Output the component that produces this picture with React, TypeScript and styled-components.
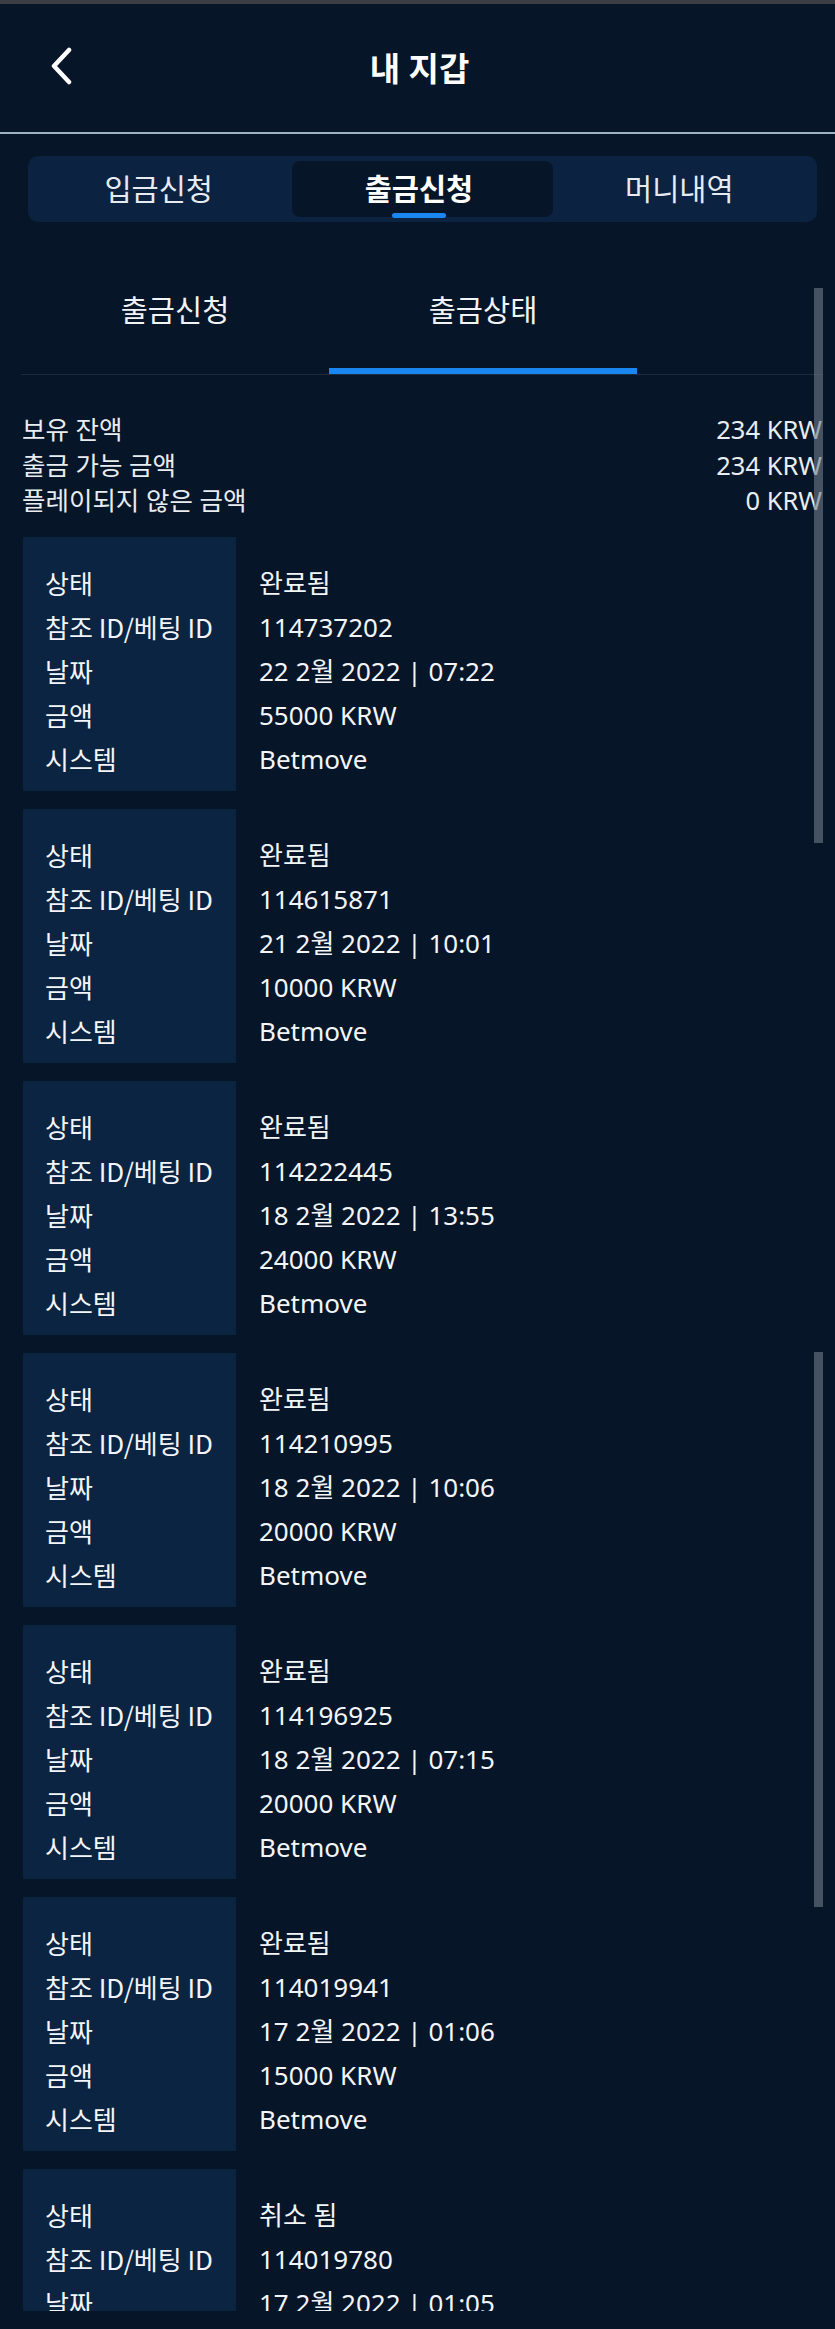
import React from "react";
import styled, { createGlobalStyle } from "styled-components";

const GlobalStyle = createGlobalStyle`
  html, body { margin: 0; padding: 0; background: #061628; }
  body {
    font-family: "Noto Sans", "Noto Sans CJK KR", sans-serif;
    color: #f1f3f6;
  }
  * { box-sizing: border-box; }
`;

const Screen = styled.div`
  position: relative;
  width: 835px;
  height: 2329px;
  overflow: hidden;
  background: #061628;
`;

const StatusStrip = styled.div`
  height: 4px;
  background: #3a3d42;
`;

const Header = styled.header`
  height: 128px;
  display: grid;
  grid-template-columns: 1fr auto 1fr;
  align-items: center;
`;

const BackButton = styled.button`
  justify-self: start;
  margin-left: 47px;
  margin-top: -4px;
  width: 28px;
  height: 40px;
  padding: 0;
  border: 0;
  background: none;
  display: flex;
  align-items: center;
  justify-content: center;
  cursor: pointer;
`;

const Title = styled.h1`
  margin: 0 0 0 4px;
  font-size: 33px;
  font-weight: 700;
  line-height: 1;
  color: #ffffff;
`;

const Divider = styled.div`
  height: 2px;
  background: #9db1c5;
`;

const MainTabs = styled.nav`
  margin: 22px 18px 0 28px;
  height: 66px;
  padding: 5px 4px;
  border-radius: 10px;
  background: #0b2341;
  display: flex;
`;

const MainTab = styled.button<{ $active?: boolean }>`
  position: relative;
  flex: 1;
  border: 0;
  border-radius: 8px;
  background: ${(p) => (p.$active ? "#061628" : "transparent")};
  color: ${(p) => (p.$active ? "#ffffff" : "#e6ebf1")};
  font-family: inherit;
  font-size: 29.5px;
  font-weight: ${(p) => (p.$active ? 700 : 400)};
  line-height: 1;
  padding: 0 7px 0 0;
  cursor: pointer;

  &::after {
    content: "";
    display: ${(p) => (p.$active ? "block" : "none")};
    position: absolute;
    left: calc(50% - 3px);
    bottom: -1px;
    width: 54px;
    height: 5px;
    margin-left: -27px;
    border-radius: 3px;
    background: #1a86f0;
  }
`;

const Body = styled.main`
  height: 2089px;
  overflow: hidden;
`;

const SubTabs = styled.div`
  margin: 26px 12px 0 21px;
  display: flex;
  border-bottom: 1px solid #1c2b3e;
`;

const SubTab = styled.button<{ $active?: boolean }>`
  width: 308px;
  height: 126px;
  padding: 4px 0 0;
  border: 0;
  border-bottom: 6px solid ${(p) => (p.$active ? "#1a86f0" : "transparent")};
  background: none;
  color: #f1f3f6;
  font-family: inherit;
  font-size: 29.5px;
  font-weight: 400;
  line-height: 1;
  cursor: pointer;
`;

const Balances = styled.dl`
  margin: 37px 13px 0 22px;
  padding: 0;
`;

const BalanceRow = styled.div`
  display: flex;
  justify-content: space-between;
  height: 35.5px;
  align-items: center;
  font-size: 25.5px;
  line-height: 35.5px;
  color: #e9ecf0;
`;

const BalanceLabel = styled.dt`
  margin: 0;
`;

const BalanceValue = styled.dd`
  margin: 0;
`;

const CardList = styled.div`
  margin: 18px 13px 0 23px;
  display: flex;
  flex-direction: column;
  gap: 18px;
`;

const Card = styled.div`
  display: grid;
  grid-template-columns: 213px 1fr;
  height: 254px;
  flex-shrink: 0;
`;

const Column = styled.div<{ $label?: boolean }>`
  display: flex;
  flex-direction: column;
  padding: 24px 0 10px ${(p) => (p.$label ? "22px" : "23px")};
  background: ${(p) => (p.$label ? "#0a2442" : "transparent")};
  font-family: ${(p) =>
    p.$label ? '"Noto Sans CJK KR", "Noto Sans", sans-serif' : "inherit"};
`;

const Cell = styled.div`
  height: 44px;
  line-height: 44px;
  font-size: 26px;
  color: #f3f5f8;
  white-space: nowrap;
`;

const ScrollThumb = styled.div`
  position: absolute;
  right: 12px;
  width: 9px;
  height: 555px;
  background: rgba(112, 124, 136, 0.6);
`;

const labels = ["상태", "참조 ID/베팅 ID", "날짜", "금액", "시스템"];

const records = [
  ["완료됨", "114737202", "22 2월 2022 | 07:22", "55000 KRW", "Betmove"],
  ["완료됨", "114615871", "21 2월 2022 | 10:01", "10000 KRW", "Betmove"],
  ["완료됨", "114222445", "18 2월 2022 | 13:55", "24000 KRW", "Betmove"],
  ["완료됨", "114210995", "18 2월 2022 | 10:06", "20000 KRW", "Betmove"],
  ["완료됨", "114196925", "18 2월 2022 | 07:15", "20000 KRW", "Betmove"],
  ["완료됨", "114019941", "17 2월 2022 | 01:06", "15000 KRW", "Betmove"],
  ["취소 됨", "114019780", "17 2월 2022 | 01:05", "15000 KRW", "Betmove"],
];

const balances = [
  ["보유 잔액", "234 KRW"],
  ["출금 가능 금액", "234 KRW"],
  ["플레이되지 않은 금액", "0 KRW"],
];

export default function App() {
  return (
    <>
      <GlobalStyle />
      <Screen>
        <StatusStrip />
        <Header>
          <BackButton aria-label="back">
            <svg width="24" height="38" viewBox="0 0 24 38" fill="none">
              <path
                d="M20 3 L5 19 L20 35"
                stroke="#ffffff"
                strokeWidth="4.5"
                strokeLinecap="round"
                strokeLinejoin="round"
              />
            </svg>
          </BackButton>
          <Title>내 지갑</Title>
          <span />
        </Header>
        <Divider />
        <MainTabs>
          <MainTab>입금신청</MainTab>
          <MainTab $active>출금신청</MainTab>
          <MainTab>머니내역</MainTab>
        </MainTabs>
        <Body>
          <SubTabs>
            <SubTab>출금신청</SubTab>
            <SubTab $active>출금상태</SubTab>
          </SubTabs>
          <Balances>
            {balances.map(([l, v]) => (
              <BalanceRow key={l}>
                <BalanceLabel>{l}</BalanceLabel>
                <BalanceValue>{v}</BalanceValue>
              </BalanceRow>
            ))}
          </Balances>
          <CardList>
            {records.map((r) => (
              <Card key={r[1]}>
                <Column $label>
                  {labels.map((l) => (
                    <Cell key={l}>{l}</Cell>
                  ))}
                </Column>
                <Column>
                  {r.map((v, i) => (
                    <Cell key={i}>{v}</Cell>
                  ))}
                </Column>
              </Card>
            ))}
          </CardList>
        </Body>
        <ScrollThumb style={{ top: 288 }} />
        <ScrollThumb style={{ top: 1352 }} />
      </Screen>
    </>
  );
}
